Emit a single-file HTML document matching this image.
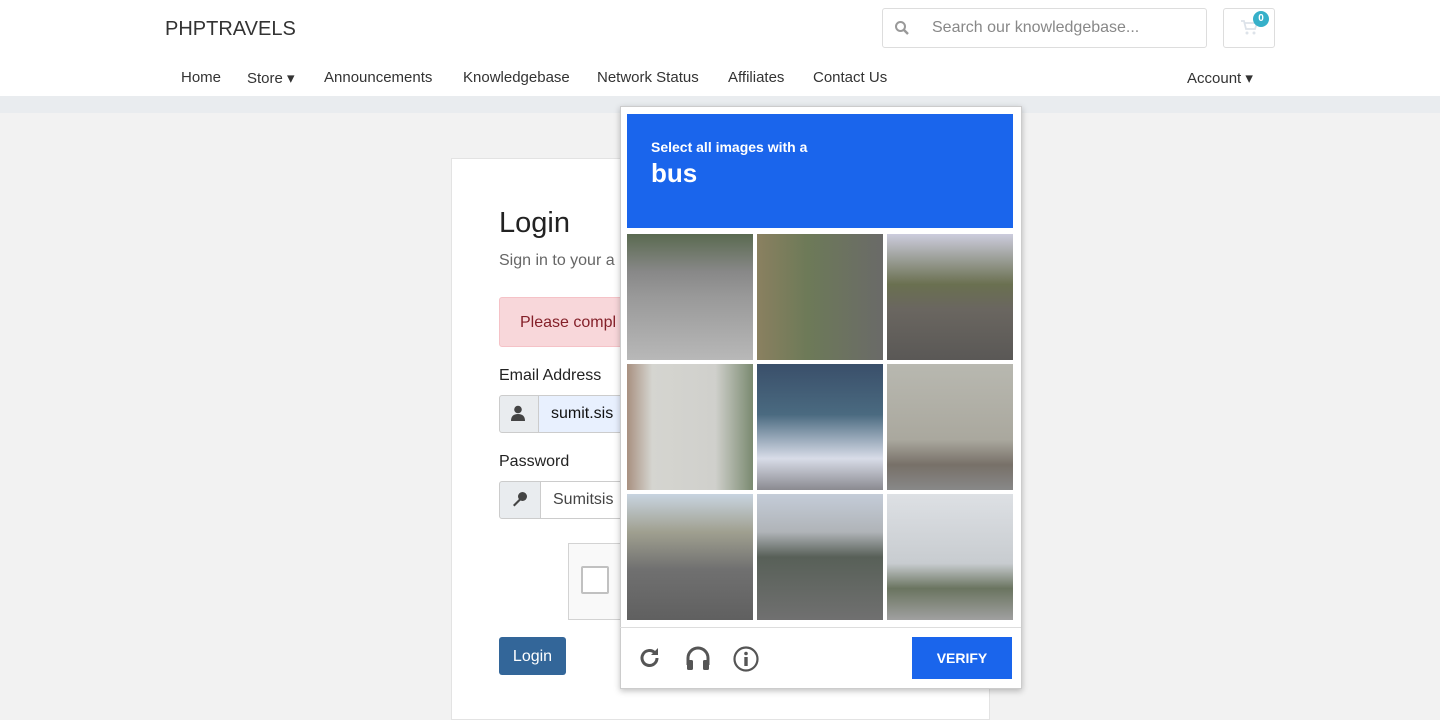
<!DOCTYPE html><html><head><style>
body{margin:0;width:1440px;height:696px;overflow:hidden;background:#f2f2f2;font-family:"Liberation Sans",sans-serif;position:relative}
.a{position:absolute}
.nav{font-size:15px;color:#333;top:69px}
.t{position:absolute;width:126px;height:126px}
</style></head><body>
<div class="a" style="left:0;top:0;width:1440px;height:96px;background:#fff"></div>
<div class="a" style="left:0;top:96px;width:1440px;height:17px;background:#e9ecef"></div>
<div class="a" style="left:165px;top:18px;font-size:20px;color:#333">PHPTRAVELS</div>
<div class="a" style="left:882px;top:8px;width:323px;height:38px;border:1px solid #ddd;border-radius:3px;background:#fff"></div>
<svg class="a" style="left:894px;top:20px" width="16" height="16" viewBox="0 0 16 16"><circle cx="6.5" cy="6.5" r="4.5" stroke="#999" stroke-width="2" fill="none"/><path d="M10 10l4 4" stroke="#999" stroke-width="2.4"/></svg>
<div class="a" style="left:932px;top:19px;font-size:16px;color:#888">Search our knowledgebase...</div>
<div class="a" style="left:1223px;top:8px;width:50px;height:38px;border:1px solid #ddd;border-radius:3px;background:#fff"></div>
<svg class="a" style="left:1241px;top:20px" width="17" height="15" viewBox="0 0 17 15"><path d="M0 1h3l2 8h9l2-6H4" stroke="#dde3ea" stroke-width="1.8" fill="none"/><circle cx="6" cy="13" r="1.5" fill="#dde3ea"/><circle cx="13" cy="13" r="1.5" fill="#dde3ea"/></svg>
<div class="a" style="left:1253px;top:11px;width:16px;height:16px;border-radius:8px;background:#36b0c9;color:#fff;font-size:10px;text-align:center;line-height:16px;font-weight:bold">0</div>
<div class="a nav" style="left:181px">Home</div>
<div class="a nav" style="left:247px">Store ▾</div>
<div class="a nav" style="left:324px">Announcements</div>
<div class="a nav" style="left:463px">Knowledgebase</div>
<div class="a nav" style="left:597px">Network Status</div>
<div class="a nav" style="left:728px">Affiliates</div>
<div class="a nav" style="left:813px">Contact Us</div>
<div class="a nav" style="left:1187px">Account ▾</div>

<div class="a" style="left:451px;top:158px;width:537px;height:560px;background:#fff;border:1px solid #e3e3e3"></div>
<div class="a" style="left:499px;top:207px;font-size:29px;color:#222">Login</div>
<div class="a" style="left:499px;top:252px;font-size:16px;color:#666">Sign in to your a</div>
<div class="a" style="left:499px;top:297px;width:140px;height:48px;background:#f8d7da;border:1px solid #f5c2c7;border-radius:3px"></div>
<div class="a" style="left:520px;top:314px;font-size:16px;color:#842029">Please compl</div>
<div class="a" style="left:499px;top:367px;font-size:16px;color:#222">Email Address</div>
<div class="a" style="left:499px;top:395px;width:39px;height:36px;background:#e9ecef;border:1px solid #ccc;border-radius:3px 0 0 3px"></div>
<div class="a" style="left:538px;top:395px;width:100px;height:36px;background:#e8f0fe;border:1px solid #ccc"></div>
<div class="a" style="left:551px;top:405px;font-size:16px;color:#111">sumit.sis</div>
<svg class="a" style="left:511px;top:405px" width="14" height="16" viewBox="0 0 14 16"><circle cx="7" cy="4.5" r="3.8" fill="#444"/><path d="M0 16q0-7 7-7t7 7z" fill="#444"/></svg>
<div class="a" style="left:499px;top:453px;font-size:16px;color:#222">Password</div>
<div class="a" style="left:499px;top:481px;width:41px;height:36px;background:#e9ecef;border:1px solid #ccc;border-radius:3px 0 0 3px"></div>
<div class="a" style="left:540px;top:481px;width:100px;height:36px;background:#fff;border:1px solid #ccc"></div>
<div class="a" style="left:553px;top:491px;font-size:16px;color:#444">Sumitsis</div>
<svg class="a" style="left:512px;top:491px" width="16" height="16" viewBox="0 0 16 16"><circle cx="10.5" cy="5.5" r="4.5" fill="#444"/><path d="M8 7L1 14l1.5 1.5L9.5 8.5z" fill="#444"/></svg>
<div class="a" style="left:568px;top:543px;width:60px;height:75px;background:#f9f9f9;border:1px solid #d3d3d3"></div>
<div class="a" style="left:581px;top:566px;width:24px;height:24px;border:2px solid #c1c1c1;background:#fff;border-radius:2px"></div>
<div class="a" style="left:499px;top:637px;width:67px;height:38px;background:#336699;border-radius:3px;color:#fff;font-size:16px;text-align:center;line-height:40px">Login</div>

<div class="a" style="left:620px;top:106px;width:400px;height:581px;background:#fff;border:1px solid #ccc;box-shadow:0 2px 6px rgba(0,0,0,.25)"></div>
<div class="a" style="left:627px;top:114px;width:386px;height:114px;background:#1a65ec"></div>
<div class="a" style="left:651px;top:139px;font-size:14px;color:#fff;font-weight:bold">Select all images with a</div>
<div class="a" style="left:651px;top:158px;font-size:26px;color:#fff;font-weight:bold">bus</div>
<div class="t" style="left:627px;top:234px;background:linear-gradient(#5a6a50 0%,#888 30%,#999 50%,#b8b8b8 100%)"></div>
<div class="t" style="left:757px;top:234px;background:linear-gradient(90deg,#8a8060,#6d7a58 40%,#6a6a68 100%)"></div>
<div class="t" style="left:887px;top:234px;background:linear-gradient(#ccd 0%,#6a7050 40%,#6a6660 60%,#5a5856 100%)"></div>
<div class="t" style="left:627px;top:364px;background:linear-gradient(90deg,#a89080,#d5d5d0 20%,#d0d0cc 70%,#7a8a70 100%)"></div>
<div class="t" style="left:757px;top:364px;background:linear-gradient(#3a4f6a 0%,#4a6a80 40%,#d8dce8 75%,#8a8a90 100%)"></div>
<div class="t" style="left:887px;top:364px;background:linear-gradient(#b8b8b0 0%,#aaa89e 60%,#777068 80%,#888 100%)"></div>
<div class="t" style="left:627px;top:494px;background:linear-gradient(#c8d4e0 0%,#a0a090 30%,#707070 60%,#606060 100%)"></div>
<div class="t" style="left:757px;top:494px;background:linear-gradient(#c4ccd8 0%,#b0b4b8 30%,#586058 50%,#707070 100%)"></div>
<div class="t" style="left:887px;top:494px;background:linear-gradient(#dde0e4 0%,#c8ccd0 55%,#6a7460 75%,#a0a0a0 100%)"></div>
<div class="a" style="left:620px;top:627px;width:401px;height:1px;background:#ddd"></div>
<svg class="a" style="left:638px;top:646px" width="24" height="24" viewBox="0 0 24 24"><path d="M19 12a7.5 7.5 0 1 1-2.2-5.3" stroke="#555" stroke-width="3" fill="none"/><path d="M20 2v7h-7z" fill="#555"/></svg>
<svg class="a" style="left:685px;top:645px" width="26" height="26" viewBox="0 0 26 26"><path d="M3 20v-7a10 10 0 0 1 20 0v7" stroke="#555" stroke-width="3" fill="none"/><rect x="2" y="15" width="6" height="10" rx="1.5" fill="#555"/><rect x="18" y="15" width="6" height="10" rx="1.5" fill="#555"/></svg>
<svg class="a" style="left:733px;top:646px" width="26" height="26" viewBox="0 0 26 26"><circle cx="13" cy="13" r="11.5" stroke="#555" stroke-width="2.2" fill="none"/><circle cx="13" cy="7.5" r="1.8" fill="#555"/><rect x="11.3" y="11" width="3.4" height="9" fill="#555"/></svg>
<div class="a" style="left:912px;top:637px;width:100px;height:42px;background:#1a65ec;color:#fff;font-weight:bold;font-size:14px;text-align:center;line-height:42px">VERIFY</div>
</body></html>
